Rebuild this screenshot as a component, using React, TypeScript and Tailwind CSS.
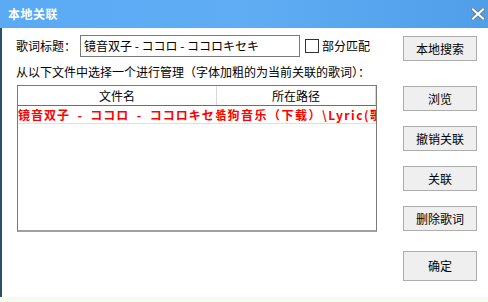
const font = { fontFamily: '"Noto Sans CJK SC", "Liberation Sans", sans-serif' };

function Btn({ label, className = "" }: { label: string; className?: string }) {
  return (
    <button
      type="button"
      className={`w-[74px] h-[25px] border border-[#adadad] bg-[#efefef] text-[12px] leading-none text-black flex items-center justify-center ${className}`}
    >
      {label}
    </button>
  );
}

function CloseIcon() {
  return (
    <svg width="14" height="12" viewBox="0 0 14 12">
      <path d="M2 1.5 L12 10.5 M12 1.5 L2 10.5" stroke="#6a7f95" strokeWidth="4" strokeLinecap="square" />
      <path d="M2 1.5 L12 10.5 M12 1.5 L2 10.5" stroke="#ffffff" strokeWidth="2" strokeLinecap="square" />
    </svg>
  );
}

export default function App() {
  return (
    <div className="w-[488px] h-[302px] flex flex-col bg-white overflow-hidden text-black" style={font}>
      {/* title bar */}
      <div className="h-[28px] shrink-0 flex items-center justify-between pl-[8px] pr-[3px] bg-gradient-to-r from-[#5aaaf4] via-[#60adf4] to-[#4f9ee8]">
        <span className="text-white font-bold text-[12px] tracking-[0.5px]">本地关联</span>
        <CloseIcon />
      </div>

      {/* body */}
      <div className="flex-1 flex border-l-2 border-[#2d4f6b]">
        {/* left side */}
        <div className="w-[386px] pl-[14px] pt-[7px] flex flex-col">
          <div className="flex items-center h-[22px] text-[12px]">
            <span className="w-[64px]">歌词标题：</span>
            <div className="w-[220px] h-[22px] border border-[#7a7a7a] flex items-center px-[3px] text-[12px] whitespace-pre">
              镜音双子 - ココロ - ココロキセキ
            </div>
            <span className="ml-[5px] w-[14px] h-[14px] border border-[#333] bg-white" />
            <span className="ml-[3px]">部分匹配</span>
          </div>
          <p className="mt-[9px] text-[12px] leading-[12px] whitespace-nowrap">
            从以下文件中选择一个进行管理（字体加粗的为当前关联的歌词）：
          </p>

          {/* list */}
          <div className="mt-[7px] ml-[1px] w-[360px] h-[147px] border border-[#7a7a7a] border-b-2 border-b-[#a0a0a0] flex flex-col text-[12px]">
            <div className="h-[20px] flex border-b border-[#6e6e6e]">
              <div className="w-[199px] flex items-center justify-center border-r border-[#d8d8d8]">文件名</div>
              <div className="flex-1 flex items-center justify-center border-r border-[#d8d8d8]">所在路径</div>
            </div>
            <div className="h-[18px] flex border-b border-[#e0e0e0] text-[#ff0000] font-bold whitespace-pre overflow-hidden">
              <div className="w-[199px] overflow-hidden flex items-center tracking-[1px]">
                镜音双子  -  ココロ  -  ココロキセキ
              </div>
              <div className="flex-1 overflow-hidden flex items-center">
                <span className="-ml-[3px] tracking-[1.5px]">酷狗音乐（下载）\Lyric(歌词)\镜音双子 - ココロ.lrc</span>
              </div>
            </div>
          </div>
        </div>

        {/* right buttons */}
        <div className="flex flex-col pl-[15px] pt-[8px]">
          <Btn label="本地搜索" />
          <Btn label="浏览" className="mt-[25px]" />
          <Btn label="撤销关联" className="mt-[15px]" />
          <Btn label="关联" className="mt-[15px]" />
          <Btn label="删除歌词" className="mt-[15px]" />
          <Btn label="确定" className="mt-[20px] h-[30px]" />
        </div>
      </div>

      {/* bottom strip */}
      <div className="h-[5px] shrink-0 bg-[#f4fdec]" />
    </div>
  );
}
